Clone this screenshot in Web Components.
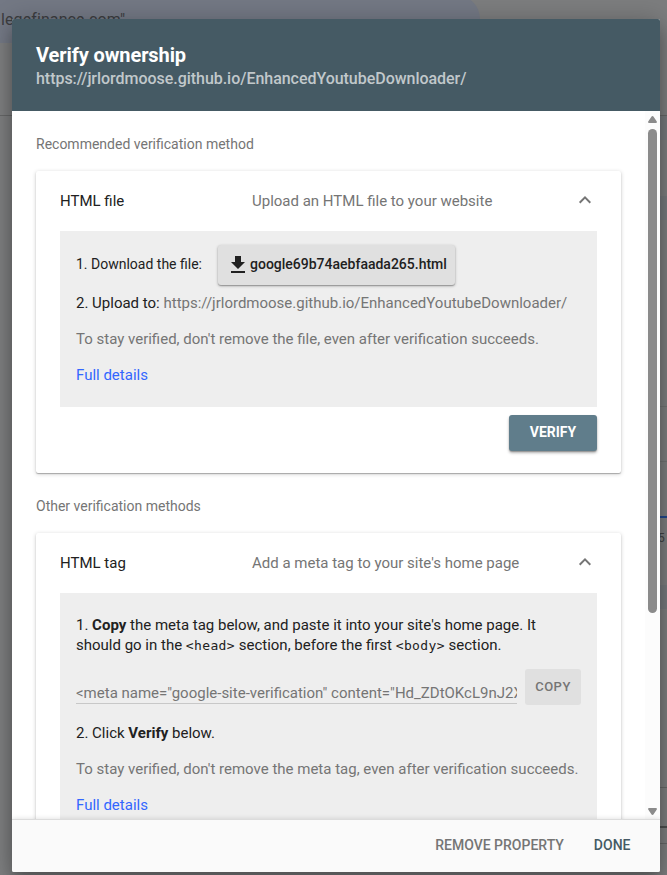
<!DOCTYPE html>
<html lang="en">
<head>
<meta charset="utf-8">
<title>Verify ownership</title>
<style>
html,body{margin:0;height:875px;overflow:hidden}
body{font-family:Roboto,"Liberation Sans",sans-serif;font-size:15px;color:#212121}
b{font-weight:700}
code{font-family:"DejaVu Sans Mono",monospace;font-size:13px;line-height:1;letter-spacing:.36px}
.grey{color:#757575}
</style>
</head>
<body>
<page-backdrop>
<verify-dialog>
  <dialog-header slot="header"><span slot="title">Verify ownership</span><span slot="url">https://jrlordmoose.github.io/EnhancedYoutubeDownloader/</span></dialog-header>
  <section-label>Recommended verification method</section-label>
  <method-card>
    <span slot="name">HTML file</span><span slot="summary">Upload an HTML file to your website</span>
    <step-line class="download"><span>1. Download the file:</span><action-button kind="file">google69b74aebfaada265.html</action-button></step-line>
    <step-line>2. Upload to: <span class="grey">https://jrlordmoose.github.io/EnhancedYoutubeDownloader/</span></step-line>
    <step-line class="grey">To stay verified, don't remove the file, even after verification succeeds.</step-line>
    <step-line kind="link">Full details</step-line>
    <action-button kind="primary" slot="actions">VERIFY</action-button>
  </method-card>
  <section-label>Other verification methods</section-label>
  <method-card>
    <span slot="name">HTML tag</span><span slot="summary">Add a meta tag to your site's home page</span>
    <step-line kind="first">1. <b>Copy</b> the meta tag below, and paste it into your site's home page. It<br>should go in the <code>&lt;head&gt;</code> section, before the first <code>&lt;body&gt;</code> section.</step-line>
    <copy-field><span>&lt;meta name="google-site-verification" content="Hd_ZDtOKcL9nJ2X</span><action-button kind="copy" slot="button">COPY</action-button></copy-field>
    <step-line>2. Click <b>Verify</b> below.</step-line>
    <step-line class="grey">To stay verified, don't remove the meta tag, even after verification succeeds.</step-line>
    <step-line kind="link">Full details</step-line>
    <action-button kind="primary" slot="actions">VERIFY</action-button>
  </method-card>
  <dialog-footer slot="footer"><action-button kind="text">REMOVE PROPERTY</action-button><action-button kind="text" class="done">DONE</action-button></dialog-footer>
</verify-dialog>
</page-backdrop>
<script>
const define=(name,html)=>{
  const t=document.createElement('template');t.innerHTML=html;
  customElements.define(name,class extends HTMLElement{
    constructor(){super();this.attachShadow({mode:'open'}).append(t.content.cloneNode(true));}
  });
};
define('page-backdrop',`<style>
:host{display:block;position:relative;box-sizing:border-box;width:667px;height:875px;padding:19px 7px 3px 12px;background:#7c7d7e;overflow:hidden}
.search{position:absolute;left:-60px;top:-5px;width:540px;height:48px;border-radius:24px;background:#737884}
.q{position:absolute;left:1px;top:10px;font-size:16px;line-height:20px;color:#3c3d40;white-space:nowrap;letter-spacing:.1px}
.l{position:absolute;left:0;width:667px;height:1px;background:#656667}
.band{position:absolute;left:660px;width:7px;height:24px;background:#75787c}
.n{position:absolute;left:658px;top:531px;font-size:12px;line-height:14px;color:#414344}
</style>
<div class="search"></div><div class="q">legefinance.com"</div>
<div class="l" style="top:115px"></div>
<div class="band" style="top:116px"></div><div class="band" style="top:196px"></div><div class="band" style="top:585px"></div>
<div class="l" style="top:406px;left:640px;background:#707172"></div><div class="l" style="top:461px;left:640px;background:#707172"></div>
<div class="l" style="top:516px;left:640px;height:2px;background:#21468b"></div><div class="n">5</div>
<div class="l" style="top:787px;left:640px"></div><div class="l" style="top:826px;left:640px;height:2px;background:#4c4d4e"></div><div class="l" style="top:843px;left:640px"></div>
<slot></slot>`);
define('verify-dialog',`<style>
:host{display:flex;flex-direction:column;position:relative;box-sizing:border-box;height:853px;border-radius:2px;background:#fff;overflow:hidden;box-shadow:0 12px 15px rgba(0,0,0,.24),0 0 24px rgba(0,0,0,.2)}
.main{display:flex;height:709px;flex:none}
.content{flex:1;overflow:hidden;padding:24px 24px 0;min-width:0;box-sizing:border-box}
.bar{width:15px;flex:none;background:#fcfcfc;display:flex;flex-direction:column;align-items:center;box-sizing:border-box;padding-top:5px}
.thumb{width:9px;height:484px;border-radius:5px;background:#8b8b8b;margin-top:6px}
svg{display:block}
</style><slot name="header"></slot>
<div class="main"><div class="content"><slot></slot></div>
<div class="bar"><svg width="9" height="7"><path d="M4.5 0Q5.2 0 5.6.7L8.8 5.6Q9.2 7 8 7H1Q-.2 7 .2 5.6L3.4.7Q3.8 0 4.5 0Z" fill="#8b8b8b"/></svg><div class="thumb"></div>
<svg width="9" height="7" style="margin-top:195px"><path d="M4.5 7Q5.2 7 5.6 6.3L8.8 1.4Q9.2 0 8 0H1Q-.2 0 .2 1.4L3.4 6.3Q3.8 7 4.5 7Z" fill="#8b8b8b"/></svg></div></div>
<slot name="footer"></slot>`);
define('dialog-header',`<style>
:host{display:flex;flex-direction:column;flex:none;height:92px;box-sizing:border-box;padding:24px 24px 0;background:#455a64;white-space:nowrap}
.t{font-size:20px;font-weight:700;line-height:24px;color:#fff;letter-spacing:-.1px}
.u{font-size:16px;line-height:24px;font-weight:500;color:#c1c8cb;letter-spacing:-.035px}
</style><div class="t"><slot name="title"></slot></div><div class="u"><slot name="url"></slot></div>`);
define('section-label',`<style>
:host{display:block;font-size:14px;line-height:18px;color:#757575;margin-bottom:18px}
</style><slot></slot>`);
define('method-card',`<style>
:host{display:block;box-sizing:border-box;height:302px;padding:0 24px;margin-bottom:24px;border-radius:2px;background:#fff;box-shadow:0 1px 4px rgba(0,0,0,.2),0 1px 1px rgba(0,0,0,.26)}
:host(:last-of-type){height:360px}
.head{display:grid;grid-template-columns:192px 1fr 24px;align-items:center;height:60px}
.s{color:#757575}
svg{display:block}
.panel{box-sizing:border-box;background:#eee;padding:12px 16px 22px;display:flow-root}
.actions{display:flex;justify-content:flex-end;padding-top:8px}
</style><div class="head"><slot name="name"></slot><div class="s"><slot name="summary"></slot></div>
<svg width="24" height="24" viewBox="0 0 24 24"><path d="M6.7 13.7 12 8.4l5.3 5.3" fill="none" stroke="#757575" stroke-width="2"/></svg></div>
<div class="panel"><slot></slot></div><div class="actions"><slot name="actions"></slot></div>`);
define('step-line',`<style>
:host{display:block;line-height:20px;margin-bottom:16px;white-space:nowrap}
:host(.download){display:flex;align-items:center;gap:16px;height:42px;margin-bottom:8px;font-size:14px}
:host([kind=link]){color:#3367ff;margin-bottom:0}
:host([kind=first]){padding-top:10px;margin-bottom:14px;height:40px}
</style><slot></slot>`);
define('copy-field',`<style>
:host{display:flex;height:36px;gap:8px;margin:-1px 0 18px;padding-top:1px;margin-top:-2px}
:host{padding-top:2px}
.in{flex:1;min-width:0;box-sizing:border-box;height:35px;border-bottom:1px solid #c8c8c8;padding-top:14px;line-height:20px;overflow:hidden;white-space:nowrap;color:#757575}
</style><div class="in"><slot></slot></div><slot name="button"></slot>`);
define('action-button',`<style>
:host{display:flex;box-sizing:border-box;align-items:center;justify-content:center;border-radius:3px;font-size:14px;font-weight:500;height:36px;white-space:nowrap}
svg{display:none}
:host([kind=file]){width:237px;height:40px;margin-top:2px;padding-bottom:2px;background:#e0e0e0;box-shadow:0 1px 3px rgba(0,0,0,.3),0 1px 1px rgba(0,0,0,.2);justify-content:flex-start;padding-left:13px}
:host([kind=file]) svg{display:block;margin-right:5px}
:host([kind=primary]){width:88px;padding-bottom:2px;background:#607d8b;color:#fff;font-weight:700;box-shadow:0 2px 3px rgba(0,0,0,.3),0 1px 1px rgba(0,0,0,.2)}
:host([kind=copy]){width:56px;padding-bottom:1px;background:#e0e0e0;color:#757575;font-size:13px;letter-spacing:.5px}
:host([kind=text]){color:#757575}
:host(.done){color:#455a64}
</style><svg width="14" height="17" viewBox="0 0 14 17"><path d="M4 0h6v6h4l-7 7-7-7h4zM0 15h14v2H0z" fill="#212121"/></svg><slot></slot>`);
define('dialog-footer',`<style>
:host{display:flex;flex:none;position:relative;height:52px;box-sizing:border-box;justify-content:flex-end;align-items:center;gap:30px;padding:0 29.5px 2px 0;background:#fafafa;box-shadow:0 -1px 0 #dcdcdc,0 -1px 5px rgba(0,0,0,.14)}
</style><slot></slot>`);
</script>
</body>
</html>
